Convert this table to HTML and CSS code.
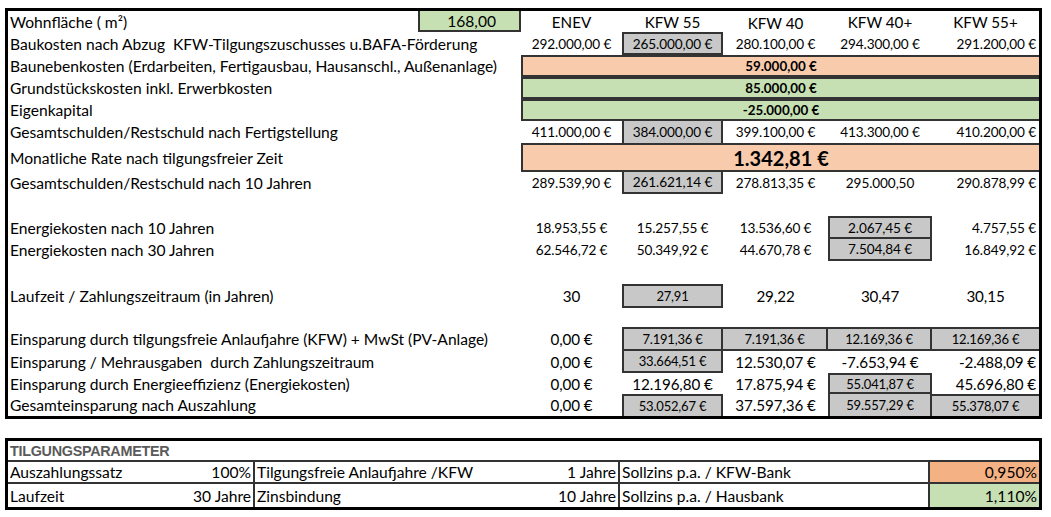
FILE: index.html
```html
<!DOCTYPE html>
<html lang="de">
<head>
<meta charset="utf-8">
<title>Finanzierungsvergleich</title>
<link rel="stylesheet" href="styles.css">
</head>
<body>
<div class="main">
  <div class="lbl">Wohnfläche ( m²)</div>
  <div class="area">168,00</div>
  <div class="hd">ENEV</div>
  <div class="hd">KFW 55</div>
  <div class="hd low">KFW 40</div>
  <div class="hd">KFW 40+</div>
  <div class="hd">KFW 55+</div>

  <div class="lbl w2">Baukosten nach Abzug&nbsp; KFW-Tilgungszuschusses u.BAFA-Förderung</div>
  <div class="v">292.000,00 €</div>
  <div class="v g">265.000,00 €</div>
  <div class="v">280.100,00 €</div>
  <div class="v">294.300,00 €</div>
  <div class="v r">291.200,00 €</div>

  <div class="lbl w2">Baunebenkosten (Erdarbeiten, Fertigausbau, Hausanschl., Außenanlage)</div>
  <div class="merge or">59.000,00 €</div>

  <div class="lbl w2">Grundstückskosten inkl. Erwerbkosten</div>
  <div class="merge gr nt">85.000,00 €</div>

  <div class="lbl w2">Eigenkapital</div>
  <div class="merge gr nt">-25.000,00 €</div>

  <div class="lbl w2">Gesamtschulden/Restschuld nach Fertigstellung</div>
  <div class="v">411.000,00 €</div>
  <div class="v g nt nb">384.000,00 €</div>
  <div class="v">399.100,00 €</div>
  <div class="v">413.300,00 €</div>
  <div class="v r">410.200,00 €</div>

  <div class="lbl w2">Monatliche Rate nach tilgungsfreier Zeit</div>
  <div class="merge or big">1.342,81 €</div>

  <div class="lbl w2">Gesamtschulden/Restschuld nach 10 Jahren</div>
  <div class="v">289.539,90 €</div>
  <div class="v g nt">261.621,14 €</div>
  <div class="v">278.813,35 €</div>
  <div class="v">295.000,50</div>
  <div class="v r">290.878,99 €</div>

  <div class="blank"></div>

  <div class="lbl w2">Energiekosten nach 10 Jahren</div>
  <div class="v">18.953,55 €</div>
  <div class="v">15.257,55 €</div>
  <div class="v">13.536,60 €</div>
  <div class="v g">2.067,45 €</div>
  <div class="v r">4.757,55 €</div>

  <div class="lbl w2">Energiekosten nach 30 Jahren</div>
  <div class="v">62.546,72 €</div>
  <div class="v">50.349,92 €</div>
  <div class="v">44.670,78 €</div>
  <div class="v g nt">7.504,84 €</div>
  <div class="v r">16.849,92 €</div>

  <div class="blank"></div>

  <div class="lbl w2">Laufzeit / Zahlungszeitraum (in Jahren)</div>
  <div class="v lg">30</div>
  <div class="v g sm">27,91</div>
  <div class="v lg">29,22</div>
  <div class="v lg">30,47</div>
  <div class="v lg">30,15</div>

  <div class="blank"></div>

  <div class="lbl w2">Einsparung durch tilgungsfreie Anlaufjahre (KFW) + MwSt (PV-Anlage)</div>
  <div class="v lg">0,00 €</div>
  <div class="v g sm">7.191,36 €</div>
  <div class="v g sm nl">7.191,36 €</div>
  <div class="v g sm nl">12.169,36 €</div>
  <div class="v g sm nl nr">12.169,36 €</div>

  <div class="lbl w2">Einsparung / Mehrausgaben&nbsp; durch Zahlungszeitraum</div>
  <div class="v lg">0,00 €</div>
  <div class="v g sm nt">33.664,51 €</div>
  <div class="v lg">12.530,07 €</div>
  <div class="v lg">-7.653,94 €</div>
  <div class="v lg r">-2.488,09 €</div>

  <div class="lbl w2">Einsparung durch Energieeffizienz (Energiekosten)</div>
  <div class="v lg">0,00 €</div>
  <div class="v lg">12.196,80 €</div>
  <div class="v lg">17.875,94 €</div>
  <div class="v g sm">55.041,87 €</div>
  <div class="v lg r">45.696,80 €</div>

  <div class="lbl w2">Gesamteinsparung nach Auszahlung</div>
  <div class="v lg">0,00 €</div>
  <div class="v g sm nb">53.052,67 €</div>
  <div class="v lg">37.597,36 €</div>
  <div class="v g sm nt nb">59.557,29 €</div>
  <div class="v g sm nl nr nb">55.378,07 €</div>
</div>

<div class="params">
  <div class="ph">TILGUNGSPARAMETER</div>

  <div class="pc sep"><span>Auszahlungssatz</span><span>100%</span></div>
  <div class="pc sep"><span>Tilgungsfreie Anlaufjahre /KFW</span><span>1 Jahre</span></div>
  <div class="pc sep"><span>Sollzins p.a. / KFW-Bank</span></div>
  <div class="pc rate or">0,950%</div>

  <div class="pc sep last"><span>Laufzeit</span><span>30 Jahre</span></div>
  <div class="pc sep last"><span>Zinsbindung</span><span>10 Jahre</span></div>
  <div class="pc sep last"><span>Sollzins p.a. / Hausbank</span></div>
  <div class="pc rate gr last">1,110%</div>
</div>
</body>
</html>
```

FILE: styles.css
```css
* { box-sizing: border-box; }

body {
  margin: 0;
  background: #fff;
  color: #000;
  font-family: Lato, "Open Sans", sans-serif;
  font-size: 15px;
}

.main {
  margin: 8px 0 0 5px;
  width: 1037px;
  border: 3px solid #000;
  display: grid;
  grid-template-columns: 410px 103px 101px 101px 105px 104px 107px;
  grid-template-rows: 21px 23px 22px 22px 22px 22px 29px 22px 22px 23px 22px 23px 24px 19px 24px 22px 21px 22px;
}

.lbl {
  display: flex;
  align-items: center;
  padding-left: 2px;
  white-space: nowrap;
  font-size: 15.6px;
}
.w2 { grid-column: span 2; }

.area {
  background: #c6e0b4;
  border: 2px solid #333;
  border-top: 0;
  display: flex;
  align-items: center;
  justify-content: flex-end;
  padding-right: 23px;
  font-size: 15.6px;
}

.hd {
  display: flex;
  align-items: center;
  justify-content: center;
  font-size: 15.2px;
}
.hd.low { padding-top: 3px; }

.v {
  display: flex;
  align-items: center;
  justify-content: center;
  font-size: 13.6px;
  letter-spacing: -0.1px;
  white-space: nowrap;
}
.v.lg { font-size: 15.2px; letter-spacing: -0.1px; }
.v.sm { font-size: 13px; letter-spacing: -0.2px; }
.v.r { justify-content: flex-end; padding-right: 3px; }

.g {
  background: #c8c8c8;
  border: 2px solid #333;
}
.nt { border-top: 0; }
.nb { border-bottom: 0; }
.nl { border-left: 0; }
.nr { border-right: 0; }

.merge {
  grid-column: span 5;
  display: flex;
  align-items: center;
  justify-content: center;
  font-size: 13.4px;
  font-weight: 700;
  border: 2px solid #333;
  border-right: 0;
}
.or { background: #f8cbad; }
.gr { background: #c6e0b4; }
.merge.big { font-size: 20px; }

.blank { grid-column: span 7; }

.params {
  margin: 19px 0 0 5px;
  width: 1037px;
  border: 3px solid #000;
  display: grid;
  grid-template-columns: 247px 365px 310px 109px;
  grid-template-rows: 21px 22px 23px;
  font-size: 15.6px;
}

.ph {
  grid-column: span 4;
  border-bottom: 2px solid #333;
  display: flex;
  align-items: center;
  padding-left: 2px;
  font-family: "Liberation Sans", Arial, sans-serif;
  font-weight: 700;
  font-size: 14.4px;
  letter-spacing: -0.3px;
  color: #5a5a5a;
}

.pc {
  display: flex;
  align-items: center;
  justify-content: space-between;
  padding: 0 2px;
  border-bottom: 2px solid #333;
  white-space: nowrap;
}
.pc.sep { border-right: 2px solid #333; }
.pc.last { border-bottom: 0; }
.pc.rate { justify-content: flex-end; padding-right: 2px; }
.params .or { background: #f4b183; }
```
